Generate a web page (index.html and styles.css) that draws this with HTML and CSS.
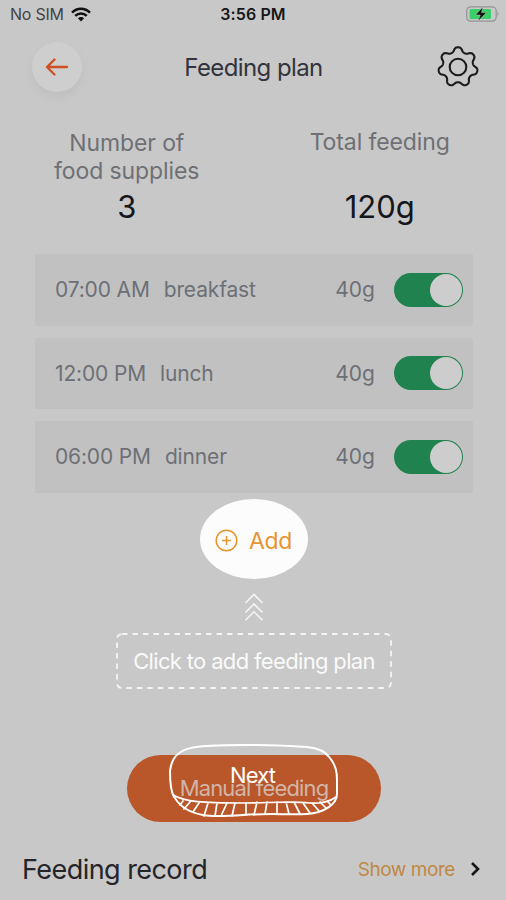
FILE: index.html
```html
<!DOCTYPE html>
<html lang="en">
<head>
<meta charset="utf-8">
<title>Feeding plan</title>
<link rel="stylesheet" href="styles.css">
</head>
<body>
<div class="screen">
  <div class="status">
    <div class="carrier"><span class="sim">No SIM</span>
      <svg width="20" height="15" viewBox="0 0 20 15" fill="none" stroke="#111" stroke-width="2.5"><path d="M1 5.6C6 .4 14 .4 19 5.6M4.2 8.9c3.300-3.300 8.300-3.300 11.600 0"/><path d="M6.900 11.300c1.800-1.700 4.400-1.700 6.200 0L10 14.500Z" fill="#111" stroke="none"/></svg>
    </div>
    <div class="clock">3:56 PM</div>
    <svg class="battery" width="34" height="17" viewBox="0 0 34 17"><rect x=".7" y=".8" width="29.500" height="14.400" rx="4" fill="none" stroke="#929592" stroke-width="1.200"/><path d="M31.500 5.500q2 2.500 0 5" fill="#929592"/><rect x="3.500" y="3" width="21.500" height="10" rx="1.500" fill="#3bcf67"/><path d="M17 .8 9.500 9h4.800L12 15.200l8.500-8.600h-5Z" fill="#111" stroke="#c8c8c8" stroke-width=".5"/></svg>
  </div>
  <header class="header">
    <div class="back"><svg width="24" height="18" viewBox="0 0 24 18" fill="none" stroke="#cf4f20" stroke-width="2.300" stroke-linecap="round" stroke-linejoin="round"><path d="M22 9H2M9.500 1.500 2 9l7.500 7.500"/></svg></div>
    <h1 class="title">Feeding plan</h1>
    <svg class="gear" width="44" height="44" viewBox="-22 -22 44 44" fill="none" stroke="#1b1b1b" stroke-width="2.100"><path id="gear" d=""/><circle r="8.300"/></svg>
  </header>
  <section class="stats">
    <div class="stat"><div class="label">Number of<br>food supplies</div><div class="value">3</div></div>
    <div class="stat total"><div class="label">Total feeding</div><div class="value">120g</div></div>
  </section>
  <section class="plans">
    <div class="plan"><span class="time">07:00 AM</span><span class="meal">breakfast</span><span class="amount">40g</span><span class="toggle"></span></div>
    <div class="plan"><span class="time">12:00 PM</span><span class="meal">lunch</span><span class="amount">40g</span><span class="toggle"></span></div>
    <div class="plan"><span class="time">06:00 PM</span><span class="meal">dinner</span><span class="amount">40g</span><span class="toggle"></span></div>
  </section>
  <div class="add"><svg width="23" height="23" viewBox="0 0 23 23" fill="none" stroke="#e6942d" stroke-width="1.500"><circle cx="11.500" cy="11.500" r="10.300"/><path d="M11.500 7v9M7 11.500h9"/></svg><span>Add</span></div>
  <svg class="chevrons" width="20" height="28" viewBox="0 0 20 28" fill="none" stroke="#f4f4f4" stroke-width="1.600"><path d="m1.500 10 8.500-8.500 8.500 8.500M1.500 19.500l8.500-8.500 8.500 8.500M1.500 27.300l8.500-8.500 8.500 8.500"/></svg>
  <div class="hint"><svg class="dash" width="278" height="58" viewBox="0 0 278 58"><rect x="2" y="2" width="274" height="54" rx="5" fill="none" stroke="#f4f4f4" stroke-width="1.800" stroke-dasharray="5.500 5"/></svg><span>Click to add feeding plan</span></div>
  <div class="manual"><span>Manual feeding</span>
    <div class="next"><svg width="170" height="74" viewBox="0 0 170 74" fill="none" stroke="#fff" stroke-width="2" stroke-linecap="round"><path d="M5 53C1 46 1 34 1 27C2 19 4 14 9 10C16 4 26 3 36 2C70 .5 106 .5 138 3C150 4 157 8 161 14C167 22 168 28 168 36V50C168 60 155 69 138 70C120 71 98 69 74 71C60 72 44 73 34 71C18 68 8 60 4 50"/><path d="M4 51C16 58 34 59 74 59C100 59 120 57 141 59C152 60 162 57 167 53M14 57l-3 4M21 58l-6 7M30 59l-6 9M39 59l-4 13M48 59l-2 13M58 59l-6 13M66 59l-3 13M77 59v12M88 58l-3 13M98 58l-2 12M108 58v12M117 58l3 12M125 58l6 12M134 59l7 10M143 59l7 8M151 58l6 6M158 57l4 4" stroke-width="1.700"/></svg><span>Next</span></div>
  </div>
  <footer class="record"><h2>Feeding record</h2><span class="more">Show more</span><svg width="12" height="16" viewBox="0 0 12 16" fill="none" stroke="#171717" stroke-width="2.600"><path d="m2 2 6 6-6 6"/></svg></footer>
</div>
<script src="gear.js"></script>
</body>
</html>
```
FILE: gear.js
```js
// Seven rounded lobes around the hub.
let d = "";
for (let i = 0; i <= 280; i++) {
  const a = i / 280 * Math.PI * 2;
  const r = 17.5 + 2.2 * Math.tanh(1.3 * Math.cos(7 * a)) / Math.tanh(1.3);
  d += (i ? "L" : "M") + (r * Math.sin(a)).toFixed(2) + " " + (-r * Math.cos(a)).toFixed(2);
}
document.getElementById("gear").setAttribute("d", d + "Z");
```
FILE: styles.css
```css
* { box-sizing: border-box; }
body { margin: 0; background: #c8c8c8; font-family: Inter, "Liberation Sans", sans-serif; }
.screen { width: 506px; height: 900px; overflow: hidden; background: #c8c8c8; }
svg { display: block; flex: none; }
.status { height: 28px; display: grid; grid-template-columns: 1fr auto 1fr; align-items: center; padding: 0 6px 0 10px; font-size: 16px; color: #171717; }
.carrier { display: flex; align-items: center; gap: 7px; color: #444; }
.sim { letter-spacing: -.25px; }
.clock { font-weight: 600; letter-spacing: .1px; position: relative; left: -2px; }
.battery { justify-self: end; }
.header { height: 78px; display: flex; align-items: center; justify-content: space-between; padding: 0 26px 0 32px; }
.back { width: 50px; height: 50px; border-radius: 50%; background: #cecece; box-shadow: 0 5px 10px #bfbfbf; display: flex; align-items: center; justify-content: center; }
.title { margin: 0 11px 0 0; font-size: 24px; font-weight: 400; letter-spacing: -.6px; color: #33333d; }
.stats { height: 148px; display: flex; padding: 23px 0 0; }
.stat { width: 253px; padding-left: 1px; display: flex; flex-direction: column; align-items: center; text-align: center; }
.total { width: 254px; }
.total .label { position: relative; top: -1px; }
.label { height: 56px; font-size: 23px; line-height: 28px; letter-spacing: -.1px; color: #6e7075; }
.value { font-size: 31px; line-height: 44px; color: #15171d; }
.plans { margin: 0 33px 0 35px; display: grid; gap: 12px; }
.plan { height: 71.500px; background: #c1c1c1; display: flex; align-items: center; padding: 0 10px 0 20px; font-size: 21px; letter-spacing: -.15px; color: #6c7076; }
.meal { margin-left: 14px; }
.amount { margin-left: auto; margin-right: 19px; letter-spacing: 0; }
.toggle { width: 69px; height: 34px; border-radius: 17px; background: #20824e; padding: 1px; display: flex; justify-content: flex-end; }
.toggle::after { content: ""; width: 32px; height: 32px; border-radius: 50%; background: #cecdcd; }
.add { width: 108px; height: 80px; margin: 6px 0 0 199.500px; border-radius: 50%; background: #fcfcfc; display: flex; align-items: center; justify-content: center; gap: 11px; padding-top: 4px; color: #e6942d; font-size: 23px; letter-spacing: -.3px; }
.chevrons { margin: 14px 0 0 243.500px; }
.hint { position: relative; width: 278px; height: 58px; margin: 11.500px 0 0 115px; display: flex; align-items: center; justify-content: center; color: #fafafa; font-size: 22px; letter-spacing: -.66px; }
.dash { position: absolute; inset: 0; }
.manual { position: relative; width: 254px; height: 67.500px; margin: 64.500px 0 0 127px; border-radius: 34px; background: #b9572a; display: flex; align-items: center; justify-content: center; color: #d1b5a8; font-size: 22px; letter-spacing: -.85px; }
.next { position: absolute; left: 42px; top: -11px; width: 170px; height: 74px; color: #fff; display: flex; align-items: center; justify-content: center; padding: 0 3px 11px 0; }
.next svg { position: absolute; inset: 0; }
.record { height: 94px; display: flex; align-items: center; padding: 0 24px 0 22px; }
.record h2 { margin: 0; font-size: 27px; font-weight: 400; letter-spacing: -.55px; color: #242429; }
.more { margin-left: auto; margin-right: 15px; font-size: 19px; letter-spacing: -.45px; color: #bf8845; }
```
